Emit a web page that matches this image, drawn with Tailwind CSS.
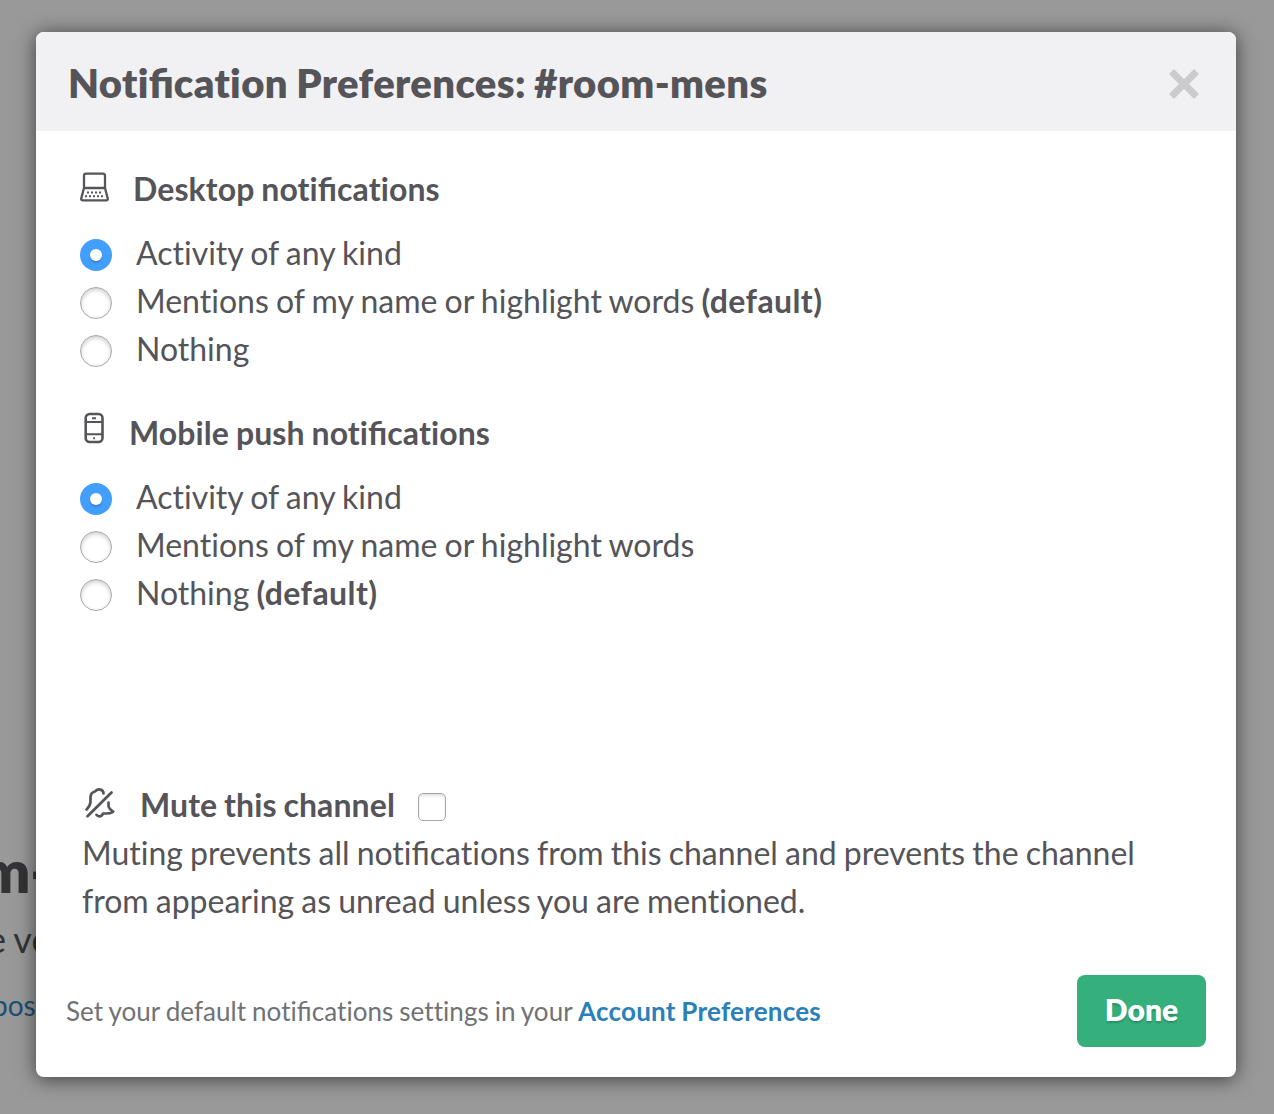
<!DOCTYPE html>
<html lang="en">
<head>
<meta charset="utf-8">
<title>Notification Preferences</title>
<script src="https://cdn.jsdelivr.net/npm/@tailwindcss/browser@4"></script>
</head>
<body class="relative w-[1274px] h-[1114px] overflow-hidden bg-[#999999] p-8 pl-9 font-['Lato',sans-serif] text-[#555459] [font-variant-ligatures:none]">
<div class="absolute right-[1222px] top-[835px] whitespace-nowrap text-[58px] leading-[72px] font-extrabold text-[#333336]">#room-</div>
<div class="absolute left-[-13px] top-[915px] whitespace-nowrap text-[36px] leading-[48px] text-[#333336] [word-spacing:-1px]">e very</div>
<div class="absolute left-[-8px] top-[985px] whitespace-nowrap text-[28px] leading-[40px] text-[#1b4f74]">pose</div>

<main class="relative flex h-[1045px] w-[1200px] flex-col rounded-lg bg-white shadow-[0_2px_20px_rgba(0,0,0,0.6)]">
  <header class="flex h-[99px] items-center justify-between rounded-t-lg bg-[#f1f1f4] pl-8 pr-[37px]">
    <h1 class="pt-[3px] text-[40px] leading-[56px] font-extrabold whitespace-nowrap tracking-[0.36px] [word-spacing:-1.3px]">Noti<span class="tracking-normal [font-variant-ligatures:normal]">fi</span>cation Preferences: #room-mens</h1>
    <svg class="mt-1 h-[30px] w-[30px]" viewBox="0 0 30 30" fill="none" stroke="#cbcbcd" stroke-width="7"><path d="M2.5 2.5 27.5 27.5M27.5 2.5 2.5 27.5"/></svg>
  </header>

  <section class="pl-11 pt-[34px] text-[32px] leading-[48px] [word-spacing:-1px]">
    <h2 class="flex h-12 items-center font-bold tracking-[0.1px]">
      <svg class="mr-6 mb-1 h-[30px] w-[29px]" viewBox="0 0 29 30" fill="none" stroke="#555459" stroke-width="2.3" stroke-linejoin="round"><path d="M4 16V3.8Q4 1.6 6.2 1.6H22.8Q25 1.6 25 3.8V16ZM4 16 1.3 26.2Q.9 28.4 2.8 28.4H26.2Q28.1 28.4 27.7 26.2L25 16"/><path d="M7 20.5H23M5 24.3H24.5" stroke-width="2" stroke-dasharray="2 2"/></svg>
      <span>Desktop noti<span class="tracking-normal [font-variant-ligatures:normal]">fi</span>cations</span></h2>
    <div class="mt-4">
      <label class="flex items-center"><i class="mr-6 mt-1 flex size-8 items-center justify-center rounded-full bg-[#439fff]"><b class="size-3 rounded-full bg-white shadow-[0_2px_2px_rgba(0,0,0,0.2)]"></b></i><span>Activity of any kind</span></label>
      <label class="flex items-center"><i class="mr-6 mt-1 size-8 rounded-full border border-[#a8a8a8] shadow-[inset_0_2px_4px_rgba(0,0,0,0.2)]"></i><span>Mentions of my name or highlight words <b class="tracking-[0.4px]">(default)</b></span></label>
      <label class="flex items-center"><i class="mr-6 mt-1 size-8 rounded-full border border-[#a8a8a8] shadow-[inset_0_2px_4px_rgba(0,0,0,0.2)]"></i><span>Nothing</span></label>
    </div>
  </section>

  <section class="pl-11 pt-9 text-[32px] leading-[48px] [word-spacing:-1px]">
    <h2 class="flex h-12 items-center font-bold tracking-[0.1px]">
      <svg class="ml-1 mr-[25px] mb-2.5 h-[32px] w-[20px]" viewBox="0 0 20 32" fill="none" stroke="#555459" stroke-width="2.6"><rect x="1.7" y="2" width="16.8" height="28" rx="4"/><path d="M2 10H18M2 22.3H18" stroke-width="2"/><path d="M8 6.3H12M9.2 26.2H11" stroke-width="2"/></svg>
      <span>Mobile push noti<span class="tracking-normal [font-variant-ligatures:normal]">fi</span>cations</span></h2>
    <div class="mt-4">
      <label class="flex items-center"><i class="mr-6 mt-1 flex size-8 items-center justify-center rounded-full bg-[#439fff]"><b class="size-3 rounded-full bg-white shadow-[0_2px_2px_rgba(0,0,0,0.2)]"></b></i><span>Activity of any kind</span></label>
      <label class="flex items-center"><i class="mr-6 mt-1 size-8 rounded-full border border-[#a8a8a8] shadow-[inset_0_2px_4px_rgba(0,0,0,0.2)]"></i><span>Mentions of my name or highlight words</span></label>
      <label class="flex items-center"><i class="mr-6 mt-1 size-8 rounded-full border border-[#a8a8a8] shadow-[inset_0_2px_4px_rgba(0,0,0,0.2)]"></i><span>Nothing <b class="tracking-[0.4px]">(default)</b></span></label>
    </div>
  </section>

  <section class="mt-[164px] pl-[46px] text-[32px] leading-[48px] [word-spacing:-1.08px]">
    <label class="flex h-12 items-center font-bold tracking-[0.1px]">
      <svg class="ml-[3px] mr-[25px] mb-1 h-[30px] w-[30px]" viewBox="0 0 30 30" fill="none" stroke="#555459" stroke-width="2.7" stroke-linecap="round" stroke-linejoin="round"><path d="M1.6 21.5Q5.5 17.5 5.5 13.5V9Q5.8 4.5 10 3.5Q12 .7 15.5 1.6Q18.5 2.5 18.5 5.5M26.5 4.5 2.5 28.3M23.5 14.5V18Q23.7 20.5 28.2 23.6Q28 25 21.5 25.5H18Q17 28.3 14.5 28.3Q12.5 28.3 11.5 26.8"/></svg>
      <span>Mute this channel</span><i class="ml-[23px] mt-1 size-7 rounded-[5px] border border-[#a8a8a8] shadow-[inset_0_2px_3px_rgba(0,0,0,0.12)]"></i></label>
    <p class="whitespace-nowrap">Muting prevents all noti<span class="[font-variant-ligatures:normal]">fi</span>cations from this channel and prevents the channel<br>from appearing as unread unless you are mentioned.</p>
  </section>

  <footer class="mt-[50px] flex h-[72px] items-center justify-between px-[30px]">
    <p class="text-[26px] text-[#717274] tracking-[0.06px] [word-spacing:-0.85px]">Set your default noti<span class="tracking-normal [font-variant-ligatures:normal]">fi</span>cations settings in your <a class="font-bold tracking-[0.22px] text-[#2a80b9]">Account Preferences</a></p>
    <button class="h-[72px] w-[129px] rounded-lg bg-[#35b07d] pb-1 text-[30px] font-extrabold text-white text-shadow-[0_2px_2px_rgba(0,0,0,0.2)]">Done</button>
  </footer>
</main>
</body>
</html>
